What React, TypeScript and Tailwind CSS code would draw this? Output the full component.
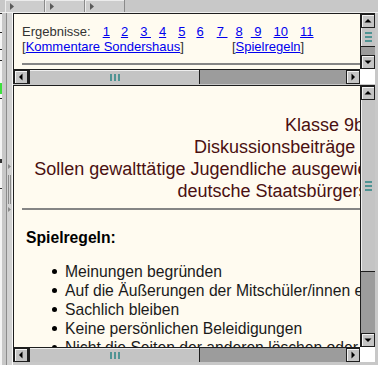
type Dir = 'up' | 'down' | 'left' | 'right';

const arrows: Record<Dir, string> = {
  up: '4,2 0.5,5.5 7.5,5.5',
  down: '0.5,2.5 7.5,2.5 4,6',
  left: '2,4 5.5,0.5 5.5,7.5',
  right: '2.5,0.5 2.5,7.5 6,4',
};

function Btn({ dir }: { dir: Dir }) {
  return (
    <div className="w-[14px] h-[14px] shrink-0 bg-[#c4c4c4] border border-[#1e1e1e] shadow-[inset_1px_1px_0_#f4f4f4] flex items-center justify-center">
      <svg width="8" height="8" viewBox="0 0 8 8" className="shrink-0">
        <polygon points={arrows[dir]} fill="#000" />
      </svg>
    </div>
  );
}

function VGrip() {
  return (
    <div className="flex flex-col gap-[2px]">
      <div className="w-[7px] h-[2px] bg-[#4f9494]" />
      <div className="w-[7px] h-[2px] bg-[#4f9494]" />
      <div className="w-[7px] h-[2px] bg-[#4f9494]" />
    </div>
  );
}

function HGrip() {
  return (
    <div className="flex gap-[2px]">
      <div className="w-[2px] h-[7px] bg-[#4f9494]" />
      <div className="w-[2px] h-[7px] bg-[#4f9494]" />
      <div className="w-[2px] h-[7px] bg-[#4f9494]" />
    </div>
  );
}

function HScroll() {
  return (
    <div className="w-[346px] h-[15px] shrink-0 flex border-t border-[#1e1e1e] bg-[#9c9c9c]">
      <Btn dir="left" />
      <div className="w-[172px] h-[14px] shrink-0 bg-[#c4c4c4] border-l-2 border-r border-[#1e1e1e] shadow-[inset_0_1px_0_#eeeeee] flex items-center justify-center">
        <HGrip />
      </div>
      <div className="flex-1 h-[14px] bg-[#9c9c9c]" />
      <Btn dir="right" />
    </div>
  );
}

function VScrollSmall() {
  return (
    <div className="w-[15px] shrink-0 flex flex-col bg-[#9c9c9c] border-l border-[#1e1e1e]">
      <Btn dir="up" />
      <div className="h-[19px] shrink-0 bg-[#c4c4c4] border-b border-[#1e1e1e] shadow-[inset_1px_0_0_#eeeeee] flex items-center justify-center">
        <VGrip />
      </div>
      <div className="flex-1 bg-[#9c9c9c]" />
      <Btn dir="down" />
    </div>
  );
}

function VScrollBig() {
  return (
    <div className="w-[15px] shrink-0 flex flex-col bg-[#9c9c9c] border-l border-[#1e1e1e]">
      <Btn dir="up" />
      <div className="h-[172px] shrink-0 bg-[#c4c4c4] border-b border-[#1e1e1e] shadow-[inset_1px_0_0_#eeeeee] flex items-center justify-center">
        <VGrip />
      </div>
      <div className="flex-1 bg-[#9c9c9c]" />
      <Btn dir="down" />
    </div>
  );
}

function TopBar() {
  return (
    <div className="h-[13px] shrink-0 flex border-b border-[#f0f0f0] bg-[#c8c8c8]">
      <div className="w-[5px]" />
      {[0, 1, 2].map((i) => (
        <div
          key={i}
          className="w-[40px] h-[12px] bg-[#cdcdcd] border-r border-[#8a8a8a] shadow-[inset_1px_1px_0_#ececec] flex items-center pl-[5px]"
        >
          <svg width="4" height="7" viewBox="0 0 4 7">
            <polygon points="0,0 4,3.5 0,7" fill="#5a5a5a" />
          </svg>
        </div>
      ))}
      <div className="flex-1" />
    </div>
  );
}

function LeftStrip() {
  return (
    <div className="w-[13px] flex shrink-0">
      <div className="w-[2px] bg-[#f4f4f4] flex flex-col">
        <div className="h-[1px] bg-[#222]" />
        <div className="mt-[18px] h-[1px] bg-[#222]" />
        <div className="mt-[16px] h-[1px] bg-[#222]" />
        <div className="mt-[10px] h-[1px] bg-[#222]" />
        <div className="mt-[22px] h-[11px] bg-[#3ee03e]" />
        <div className="mt-[4px] h-[1px] bg-[#222]" />
        <div className="mt-[60px] h-[4px] bg-[#333]" />
        <div className="mt-[25px] h-[1px] bg-[#333]" />
      </div>
      <div className="w-[4px] bg-[#c8c8c8]" />
      <div className="w-[1px] bg-[#8c8c8c]" />
      <div className="w-[5px] bg-[#d2d2d2] flex flex-col items-center">
        <div className="h-[151px]" />
        <svg width="3" height="5" viewBox="0 0 3 5">
          <polygon points="0,0 3,2.5 0,5" fill="#8a8a8a" />
        </svg>
        <div className="mt-[6px] h-[29px] flex gap-[1px]">
          <div className="w-px h-full bg-[#8a8a8a]" />
          <div className="w-px h-full bg-[#8a8a8a]" />
        </div>
        <div className="mt-[3px]" />
        <svg width="3" height="5" viewBox="0 0 3 5">
          <polygon points="0,0 3,2.5 0,5" fill="#8a8a8a" />
        </svg>
      </div>
      <div className="w-[1px] bg-[#f8f8f8]" />
    </div>
  );
}

const pages: { label: string; ml: string }[] = [
  { label: '1', ml: 'ml-[12px]' },
  { label: '2', ml: 'ml-[11px]' },
  { label: '3\u00a0', ml: 'ml-[12px]' },
  { label: '4', ml: 'ml-[8px]' },
  { label: '5', ml: 'ml-[12px]' },
  { label: '6', ml: 'ml-[11px]' },
  { label: '7\u00a0', ml: 'ml-[13px]' },
  { label: '8', ml: 'ml-[8px]' },
  { label: '\u00a09', ml: 'ml-[8px]' },
  { label: '10', ml: 'ml-[12px]' },
  { label: '11', ml: 'ml-[12px]' },
];

const rules = [
  'Meinungen begründen',
  'Auf die Äußerungen der Mitschüler/innen eingehen',
  'Sachlich bleiben',
  'Keine persönlichen Beleidigungen',
  'Nicht die Seiten der anderen löschen oder verändern',
];

export default function App() {
  return (
    <div className="w-[378px] h-[365px] bg-[#c8c8c8] flex flex-col overflow-hidden font-['Liberation_Sans',Arial,sans-serif]">
      <TopBar />
      <div className="h-[352px] flex">
        <LeftStrip />
        <div className="w-[362px] shrink-0 flex flex-col">
          {/* navigation frame */}
          <div className="h-[71px] shrink-0 border-t border-l border-[#1e1e1e] flex flex-col">
            <div className="h-[55px] flex">
              <div className="w-[346px] shrink-0 h-full overflow-hidden bg-[#fffbf0]">
                <div className="w-[621px] pl-[8px] pt-[10px] text-[13px] leading-[15px] text-[#333]">
                  <div className="flex whitespace-pre">
                    <span>Ergebnisse:</span>
                    {pages.map((p) => (
                      <a key={p.label} className={`${p.ml} text-[#0000ee] underline`}>
                        {p.label}
                      </a>
                    ))}
                  </div>
                  <div className="flex whitespace-pre">
                    <span>
                      [<a className="text-[#0000ee] underline">Kommentare Sondershaus</a>]
                    </span>
                    <span className="ml-[48px]">
                      [<a className="text-[#0000ee] underline">Spielregeln</a>]
                    </span>
                  </div>
                  <div className="mt-[9px] h-[2px] bg-[#858585]" />
                </div>
              </div>
              <VScrollSmall />
            </div>
            <div className="h-[15px] flex">
              <HScroll />
              <div className="w-[15px] bg-white" />
            </div>
          </div>
          <div className="h-px shrink-0 bg-[#c8c8c8]" />
          {/* main frame */}
          <div className="h-[277px] shrink-0 border-t border-l border-[#1e1e1e] flex flex-col">
            <div className="h-[261px] flex">
              <div className="w-[346px] shrink-0 h-full overflow-hidden bg-[#fffbf0]">
                <div className="w-[621px] pt-[28px]">
                  <div className="text-center text-[18px] leading-[22px] text-[#4a1010] whitespace-nowrap">
                    Klasse 9b
                    <br />
                    Diskussionsbeiträge zum Thema
                    <br />
                    Sollen gewalttätige Jugendliche ausgewiesen werden, auch wenn sie die
                    <br />
                    deutsche Staatsbürgerschaft haben?
                  </div>
                  <div className="mx-[8px] mt-[6px] h-[2px] bg-[#858585]" />
                  <div className="ml-[12px] mt-[18px] text-[15.7px] leading-[19px] font-bold text-black">
                    Spielregeln:
                  </div>
                  <ul className="mt-[15px] text-[15.7px] leading-[19px] text-[#1a1a1a]">
                    {rules.map((r) => (
                      <li key={r} className="flex items-center whitespace-nowrap">
                        <span className="ml-[38px] w-[5px] h-[5px] rounded-full bg-black" />
                        <span className="ml-[8px]">{r}</span>
                      </li>
                    ))}
                  </ul>
                </div>
              </div>
              <VScrollBig />
            </div>
            <div className="h-[15px] flex">
              <HScroll />
              <div className="w-[15px] bg-white" />
            </div>
          </div>
          <div className="h-[3px] shrink-0 bg-[#c8c8c8]" />
        </div>
        <div className="w-[3px] shrink-0 bg-[#c8c8c8]" />
      </div>
    </div>
  );
}
